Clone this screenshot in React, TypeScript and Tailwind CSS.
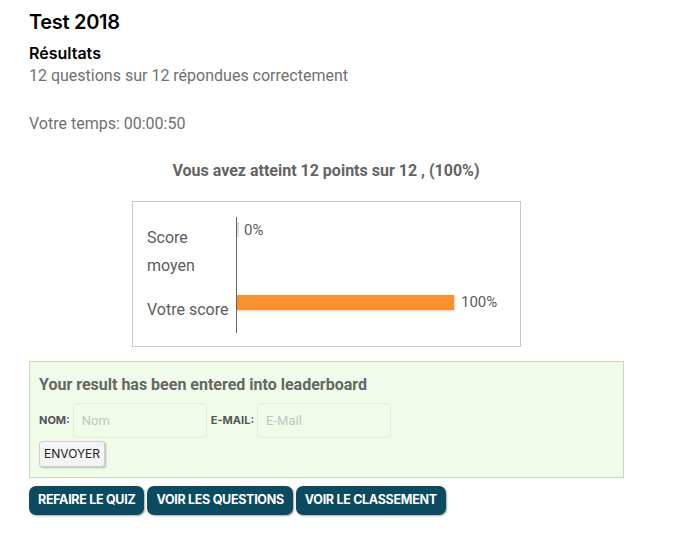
const poppins = "font-['Inter','Open_Sans',sans-serif]";

function Chart() {
  return (
    <div className="w-[389px] h-[146px] border border-[#c8c8c8] bg-white ml-[103px] mt-[19px] flex">
      <div className="w-[103px] pl-[14px] pt-[22px] text-[16px] leading-[28px] text-[#5c5c5c]">
        <div>Score</div>
        <div>moyen</div>
        <div className="mt-[16px]">Votre score</div>
      </div>
      <div className="mt-[15px] h-[116px] border-l border-[#666] flex flex-col">
        <div className="flex items-start pt-[5px]">
          <div className="w-[2px] h-[15px] bg-[#ddd]" />
          <span className="ml-[5px] text-[15px] leading-[16px] text-[#5c5c5c]">0%</span>
        </div>
        <div className="flex items-center mt-[57px]">
          <div className="w-[217px] h-[15px] bg-[#f7912f] shadow-[1px_1px_2px_rgba(0,0,0,0.2)]" />
          <span className="ml-[7px] text-[15px] leading-[16px] text-[#5c5c5c] -mt-[2px]">100%</span>
        </div>
      </div>
    </div>
  );
}

export default function App() {
  return (
    <div className="min-h-screen bg-white font-['Roboto',sans-serif] px-[29px] pt-[8px]">
      <h1 className={`${poppins} text-[20px] leading-[28px] font-semibold text-black tracking-[-0.3px]`}>Test 2018</h1>
      <h2 className={`${poppins} text-[16px] leading-[20px] font-semibold text-black mt-[7px]`}>Résultats</h2>
      <p className="text-[16px] leading-[22px] text-[#707070] mt-[2px]">12 questions sur 12 répondues correctement</p>
      <p className="text-[16px] leading-[22px] text-[#707070] mt-[26px]">Votre temps: 00:00:50</p>
      <p className="text-[16px] leading-[22px] text-[#646464] font-bold text-center w-[594px] mt-[25px]">
        Vous avez atteint 12 points sur 12 , (100%)
      </p>
      <Chart />
      <div className="w-[595px] mt-[14px] bg-[#f1fbe9] border border-[#c8d9b8] px-[9px] pt-[12px] pb-[10px]">
        <p className="text-[16px] leading-[22px] font-bold text-[#666]">Your result has been entered into leaderboard</p>
        <div className="flex items-center mt-[7px] gap-[3px]">
          <span className={`${poppins} text-[11px] font-bold text-[#555]`}>NOM:</span>
          <input placeholder="Nom" className="w-[134px] h-[35px] rounded-[3px] border border-[#e3eedb] bg-[#f1fbe9] px-[8px] text-[13px] placeholder:text-[#c4c4c4] outline-none" />
          <span className={`${poppins} text-[11px] font-bold text-[#555] ml-[1px]`}>E-MAIL:</span>
          <input placeholder="E-Mail" className="w-[134px] h-[35px] rounded-[3px] border border-[#e3eedb] bg-[#f1fbe9] px-[8px] text-[13px] placeholder:text-[#c4c4c4] outline-none" />
        </div>
        <button className={`${poppins} mt-[3px] h-[26px] px-[4px] text-[12px] text-[#222] bg-[#f4f4f4] border border-[#cfcfcf] rounded-[3px] shadow-[1px_1px_2px_rgba(0,0,0,0.25)]`}>
          ENVOYER
        </button>
      </div>
      <div className="flex gap-[3px] mt-[8px]">
        {["REFAIRE LE QUIZ", "VOIR LES QUESTIONS", "VOIR LE CLASSEMENT"].map((t) => (
          <button
            key={t}
            className={`${poppins} h-[29px] px-[9px] rounded-[7px] bg-[#0b4a5f] text-white text-[12.5px] font-bold tracking-[-0.3px] shadow-[1px_1px_2px_rgba(0,0,0,0.35)]`}
          >
            {t}
          </button>
        ))}
      </div>
    </div>
  );
}
